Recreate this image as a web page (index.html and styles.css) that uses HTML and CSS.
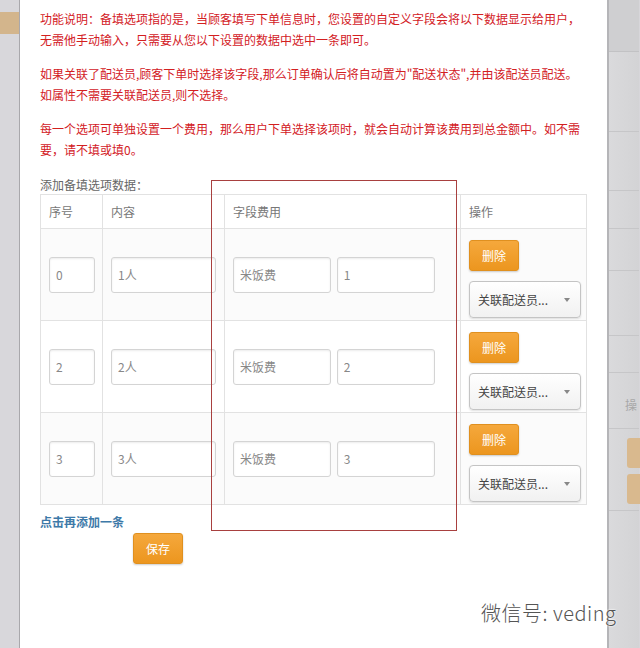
FILE: index.html
```html
<!DOCTYPE html>
<html lang="zh-CN">
<head>
    <meta charset="UTF-8">
    <title>备填选项数据</title>
    <link rel="stylesheet" href="styles.css">
</head>
<body>
    <div class="page">
        <!-- Background page on the left -->
        <div class="side side-left">
            <div class="tan-tab"></div>
        </div>

        <!-- Modal -->
        <div class="modal">
            <p class="note">功能说明：备填选项指的是，当顾客填写下单信息时，您设置的自定义字段会将以下数据显示给用户，无需他手动输入，只需要从您以下设置的数据中选中一条即可。</p>
            <p class="note">如果关联了配送员,顾客下单时选择该字段,那么订单确认后将自动置为"配送状态",并由该配送员配送。如属性不需要关联配送员,则不选择。</p>
            <p class="note">每一个选项可单独设置一个费用，那么用户下单选择该项时，就会自动计算该费用到总金额中。如不需要，请不填或填0。</p>

            <div class="label">添加备填选项数据：</div>
            <table class="options">
                <thead>
                    <tr>
                        <th class="col-no">序号</th>
                        <th class="col-content">内容</th>
                        <th class="col-fee">字段费用</th>
                        <th class="col-op">操作</th>
                    </tr>
                </thead>
                <tbody id="rows"></tbody>
            </table>

            <a class="add-link" href="#">点击再添加一条</a>
            <button class="btn btn-save">保存</button>
        </div>

        <!-- Background page on the right -->
        <div class="side side-right">
            <div class="band"></div>
            <div class="rline" style="top: 131px"></div>
            <div class="rline" style="top: 190px"></div>
            <div class="rline" style="top: 228px"></div>
            <div class="rline" style="top: 270px"></div>
            <div class="rline" style="top: 335px"></div>
            <div class="rline" style="top: 372px"></div>
            <span class="rtext">操</span>
            <div class="rline" style="top: 428px"></div>
            <div class="rtab rtab-1"></div>
            <div class="rtab rtab-2"></div>
            <div class="rline" style="top: 510px"></div>
        </div>

        <!-- Annotation box drawn over the screenshot -->
        <div class="mark"></div>
        <div class="watermark">微信号: veding</div>
    </div>

    <script>
        const rows = [
            { no: '0', content: '1人', name: '米饭费', fee: '1' },
            { no: '2', content: '2人', name: '米饭费', fee: '2' },
            { no: '3', content: '3人', name: '米饭费', fee: '3' }
        ];

        const tbody = document.getElementById('rows');
        rows.forEach(row => {
            const tr = document.createElement('tr');
            tr.innerHTML = `
                <td><input class="input input-no" type="text" value="${row.no}"></td>
                <td><input class="input input-content" type="text" value="${row.content}"></td>
                <td class="fee-cell">
                    <input class="input input-fee" type="text" value="${row.name}">
                    <input class="input input-fee" type="text" value="${row.fee}">
                </td>
                <td class="op-cell">
                    <button class="btn btn-del">删除</button>
                    <div class="select">关联配送员...<span class="caret"></span></div>
                </td>
            `;
            tbody.appendChild(tr);
        });
    </script>
</body>
</html>
```

FILE: styles.css
```css
/* Basic Reset */
* {
    margin: 0;
    padding: 0;
    box-sizing: border-box;
}

body {
    font-family: "Noto Sans CJK SC", "Liberation Sans", sans-serif;
    font-size: 12px;
    background-color: #d7d6da;
    overflow: hidden;
}

.page {
    position: relative;
    display: flex;
    width: 640px;
    height: 648px;
    overflow: hidden;
}

/* Greyed page behind the modal */
.side {
    flex: none;
    position: relative;
    background-color: #d8d7db;
}

.side-left {
    width: 20px;
    border-right: 1px solid #a9a8ac;
}

.tan-tab {
    margin-top: 12px;
    height: 22px;
    background-color: #d3b58c;
}

.side-right {
    width: 32px;
    border-left: 2px solid #b5b5b8;
    background: linear-gradient(to right, #dadadc, #d3d3d5);
}

.band {
    height: 52px;
    background-color: #cfcfd1;
    border-bottom: 1px solid #c2c2c4;
}

.rline {
    position: absolute;
    left: 0;
    right: 0;
    border-top: 1px solid #c6c6c8;
}

.rtext {
    position: absolute;
    top: 396px;
    left: 16px;
    color: #a8a8a8;
    font-size: 12px;
}

.rtab {
    position: absolute;
    left: 18px;
    width: 20px;
    height: 30px;
    border-radius: 3px;
    background-color: #d9b98e;
}

.rtab-1 { top: 438px; }
.rtab-2 { top: 474px; }

/* Modal */
.modal {
    flex: none;
    width: 587px;
    padding: 8px 20px 0 20px;
    background-color: #fff;
    box-shadow: 1px 0 3px rgba(0, 0, 0, 0.25);
}

.note {
    color: #d3201f;
    font-size: 12px;
    line-height: 21px;
    margin-bottom: 13px;
    padding-right: 6px;
}

.label {
    color: #666;
    line-height: 18px;
    padding-top: 3px;
}

/* Options table */
.options {
    width: 546px;
    border-collapse: collapse;
    border: 1px solid #dedede;
    table-layout: fixed;
}

.options th {
    height: 34px;
    text-align: left;
    font-weight: normal;
    color: #777;
    padding-left: 8px;
    border: 1px solid #e2e2e2;
    background-color: #fff;
}

.col-no { width: 62px; }
.col-content { width: 122px; }
.col-fee { width: 236px; }
.col-op { width: 126px; }

.options td {
    height: 92px;
    padding: 0 7px 0 8px;
    border: 1px solid #e2e2e2;
    vertical-align: middle;
    background-color: #fbfbfb;
}

.options tbody tr:nth-child(2) td {
    background-color: #fff;
}

.input {
    height: 36px;
    padding: 0 6px;
    border: 1px solid #d4d4d4;
    border-radius: 3px;
    box-shadow: inset 0 1px 2px rgba(0, 0, 0, 0.08);
    font-family: inherit;
    font-size: 12px;
    color: #888;
    background-color: #fff;
}

.input-no { width: 46px; }
.input-content { width: 105px; }
.input-fee { width: 98px; }

.fee-cell .input + .input {
    margin-left: 3px;
}

.op-cell {
    padding-top: 8px !important;
}

/* Buttons */
.btn {
    display: block;
    border: 1px solid #e0901f;
    border-radius: 3px;
    background: linear-gradient(to bottom, #f5a83c, #ec961f);
    box-shadow: 0 1px 2px rgba(0, 0, 0, 0.2);
    color: #fff;
    font-family: inherit;
    font-size: 12px;
    cursor: pointer;
}

.btn-del {
    width: 50px;
    height: 31px;
    margin-bottom: 10px;
}

.btn-save {
    width: 50px;
    height: 31px;
    margin: 3px 0 0 93px;
}

.select {
    position: relative;
    width: 112px;
    height: 37px;
    line-height: 35px;
    padding-left: 8px;
    border: 1px solid #c4c4c4;
    border-radius: 4px;
    background: linear-gradient(to bottom, #ffffff, #f1f1f1);
    box-shadow: 0 1px 2px rgba(0, 0, 0, 0.12);
    color: #444;
    font-size: 12px;
}

.caret {
    position: absolute;
    right: 10px;
    top: 16px;
    border-left: 3px solid transparent;
    border-right: 3px solid transparent;
    border-top: 4px solid #888;
}

.add-link {
    display: block;
    margin-top: 9px;
    line-height: 16px;
    color: #3d79a8;
    font-weight: bold;
    text-decoration: none;
}

/* Overlays */
.mark {
    position: absolute;
    left: 211px;
    top: 180px;
    width: 246px;
    height: 351px;
    border: 1px solid #a8403f;
}

.watermark {
    position: absolute;
    left: 481px;
    top: 598px;
    font-size: 20px;
    font-weight: 300;
    letter-spacing: 0.5px;
    color: #555;
    text-shadow: 0 0 2px #fff, 0 0 2px #fff;
}
```
